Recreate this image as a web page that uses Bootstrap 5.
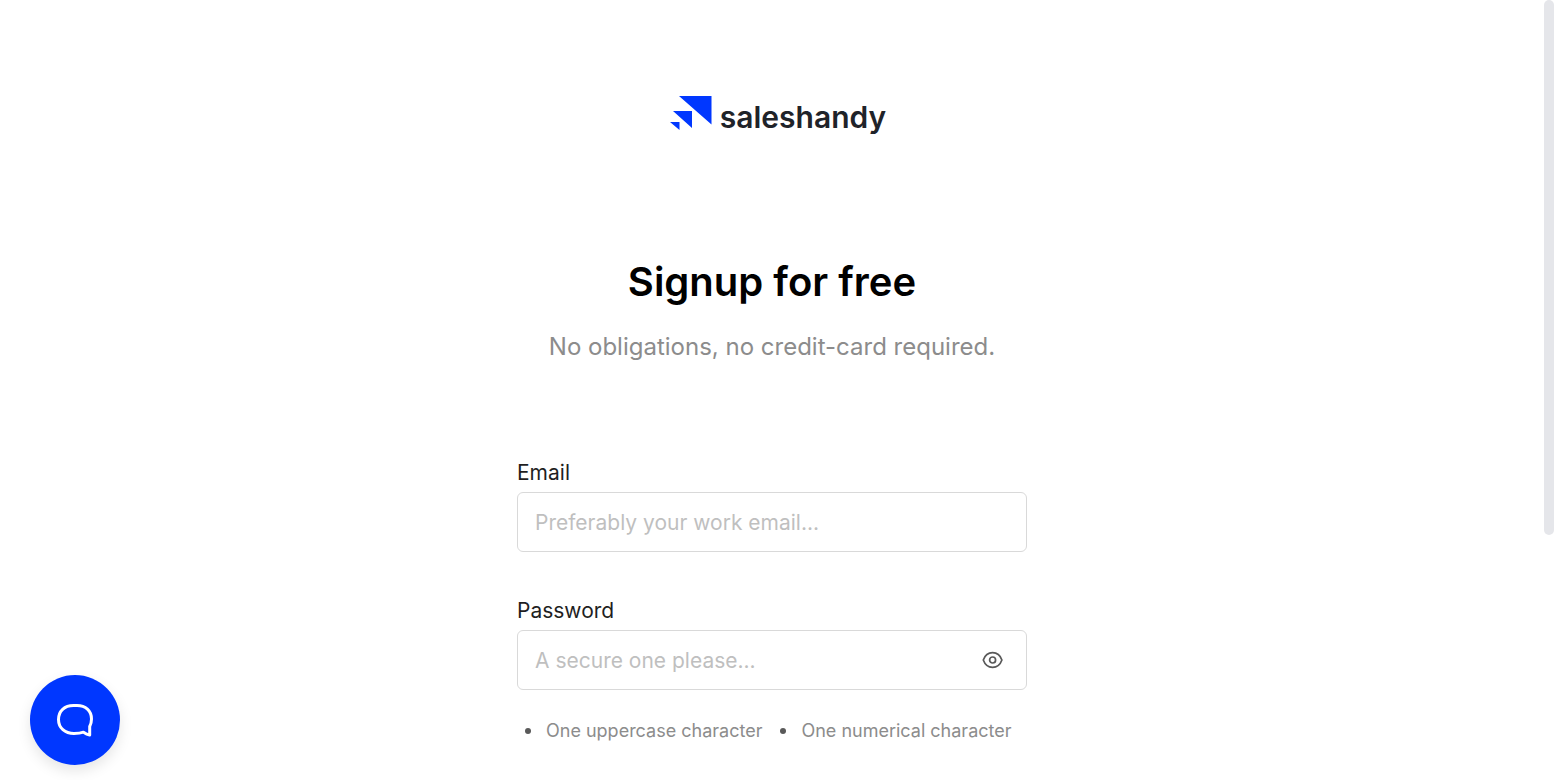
<!DOCTYPE html>
<html lang="en">
<head>
<meta charset="utf-8">
<meta name="viewport" content="width=device-width, initial-scale=1">
<title>Signup for free - Saleshandy</title>
<link href="https://cdn.jsdelivr.net/npm/bootstrap@5.3.0/dist/css/bootstrap.min.css" rel="stylesheet">
<style>
  body { font-family: Inter, "Liberation Sans", sans-serif; color: #1f2937; }
  .page { height: 100vh; overflow: hidden; }
  .signup { width: 510px; max-width: 100%; padding-top: 96px; }
  .brand { color: #1f2329; font-size: 30px; line-height: 42px; font-weight: 600; margin-left: 12px; }
  .title { color: #000; font-size: 40px; line-height: 56px; font-weight: 600; margin: 116px 0 21px; }
  .subtitle { color: #8c8c8c; font-size: 24px; line-height: 32px; margin-bottom: 94px; }
  .form-label { color: #1f1f1f; font-size: 21px; line-height: 32px; margin-bottom: 3px; font-weight: 400; }
  .form-control { height: 60px; padding: 0 17px; font-size: 21px; border-color: #d9d9d9; border-radius: 6px; }
  .form-control::placeholder { color: #bfbfbf; }
  .field { margin-bottom: 43px; }
  .reveal { right: 22px; width: 24px; height: 24px; color: #595959; }
  .rules { color: #8c8c8c; font-size: 18px; line-height: 26px; gap: 18px; padding-left: 8px; margin-top: -15px; }
  .rules li::before { content: ""; width: 6px; height: 6px; border-radius: 50%; background: #595959; margin-right: 15px; }
  .chat { left: 30px; bottom: 15px; width: 90px; height: 90px; background: #0037ff; box-shadow: 0 6px 14px rgba(0,0,0,.1); }
  .rail { width: 10px; }
  .thumb { height: 535px; border-radius: 5px; background: #e5e6ea; }
</style>
</head>
<body>
<div class="page d-flex">
  <main class="flex-grow-1 d-flex justify-content-center">
    <div class="signup">
      <a href="#" class="brand d-flex justify-content-center align-items-start text-decoration-none">
        <svg class="me-2" width="42" height="34" viewBox="0 0 42 34" fill="#0037ff" aria-hidden="true"><path d="M9 0H41.5V28.5ZM3 15H22V32ZM0 26H9.5V34Z"/></svg>
        <span>saleshandy</span>
      </a>
      <h1 class="title text-center">Signup for free</h1>
      <p class="subtitle text-center">No obligations, no credit-card required.</p>
      <form>
        <div class="field">
          <label class="form-label d-block" for="email">Email</label>
          <input class="form-control" id="email" type="email" placeholder="Preferably your work email...">
        </div>
        <div class="field">
          <label class="form-label d-block" for="password">Password</label>
          <div class="position-relative d-flex align-items-center">
            <input class="form-control" id="password" type="password" placeholder="A secure one please...">
            <button type="button" class="reveal btn p-0 border-0 position-absolute d-flex align-items-center justify-content-center" aria-label="Show password">
              <svg width="22" height="18" viewBox="0 0 22 18" fill="none" stroke="currentColor" stroke-width="1.7"><path d="M1.300 9C3 4.200 6.500 1.700 10.600 1.700S18.200 4.200 19.900 9C18.200 13.800 14.700 16.300 10.600 16.300S3 13.800 1.300 9Z" stroke-linejoin="round"/><circle cx="10.600" cy="9" r="3"/></svg>
            </button>
          </div>
        </div>
        <ul class="rules list-unstyled d-flex">
          <li class="d-flex align-items-center">One uppercase character</li>
          <li class="d-flex align-items-center">One numerical character</li>
        </ul>
      </form>
    </div>
  </main>
  <div class="rail flex-shrink-0" aria-hidden="true"><div class="thumb"></div></div>
</div>
<button type="button" class="chat btn rounded-circle border-0 p-0 position-fixed d-flex align-items-center justify-content-center" aria-label="Open chat">
  <svg width="38" height="36" viewBox="0 0 38 36" fill="none" stroke="#fff" stroke-width="3" stroke-linejoin="round"><path d="M33.700 24.500C35 22 35.500 19.500 35.500 17C35.500 8.500 29.500 3.500 21 3.500H17.500C8.500 3.500 2.500 9 2.500 17.500S9 31.500 18 31.500C21.500 31.500 24.800 31.200 27.500 30.200C29.500 31.500 31.500 32.500 33.700 33Z"/></svg>
</button>
<script src="https://cdn.jsdelivr.net/npm/bootstrap@5.3.0/dist/js/bootstrap.bundle.min.js"></script>
</body>
</html>
